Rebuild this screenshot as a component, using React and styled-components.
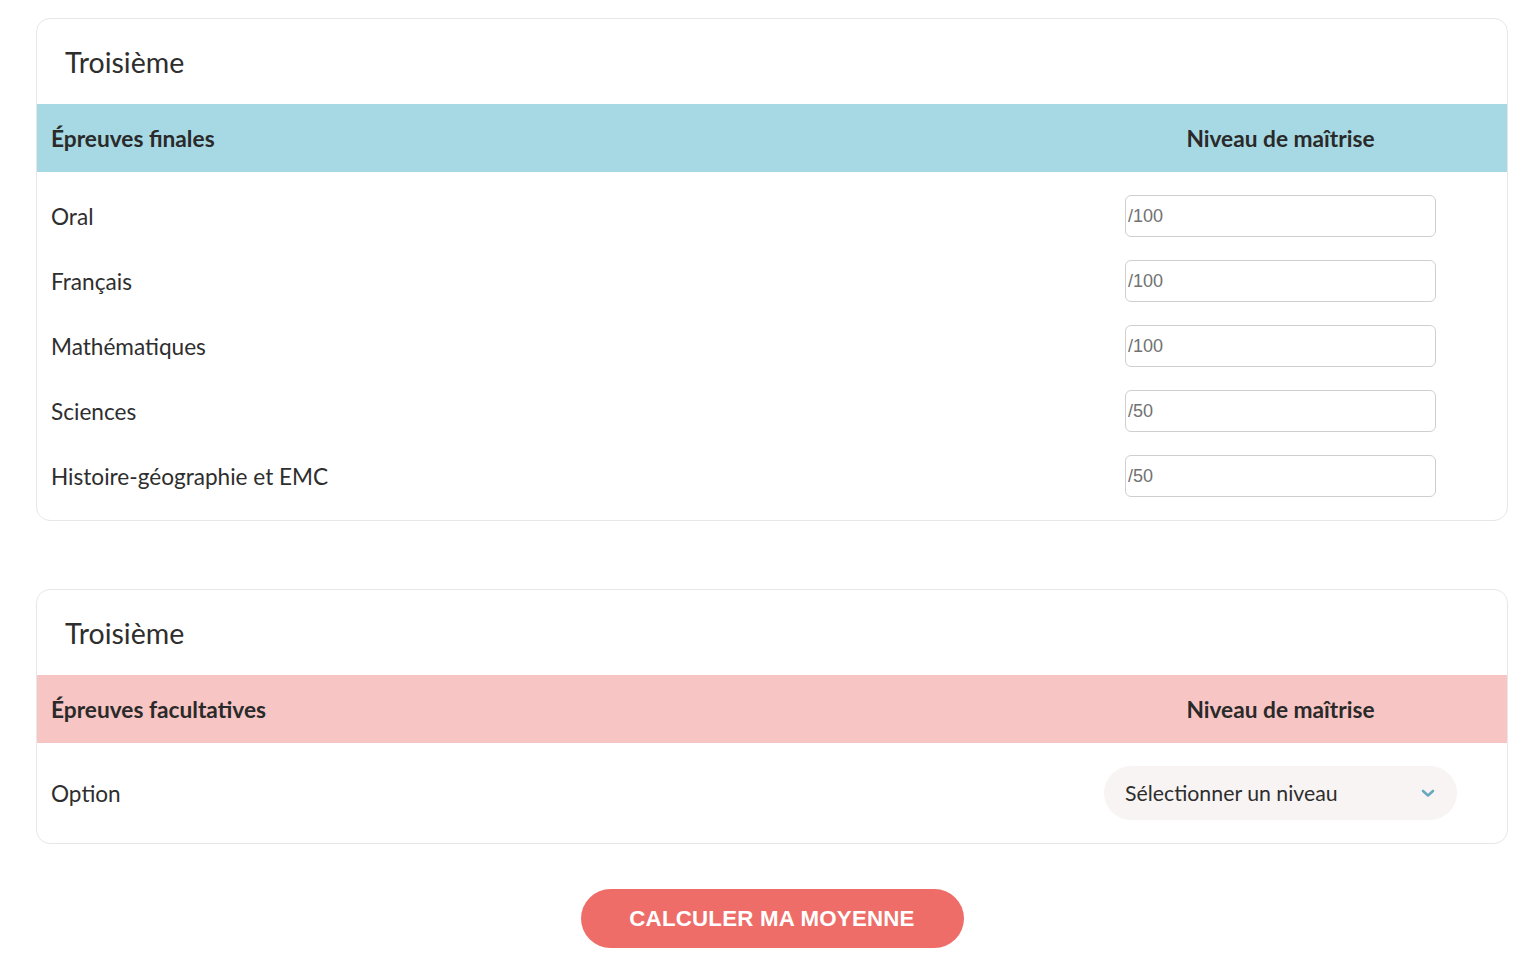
import React from "react";
import styled, { createGlobalStyle } from "styled-components";

const Global = createGlobalStyle`
  html, body { margin: 0; padding: 0; background: #fff; }
  body { font-family: Lato, "Noto Sans", sans-serif; color: #333; }
  * { box-sizing: border-box; }
`;

const Page = styled.div`
  padding: 18px 28px 40px 36px;
  display: flex;
  flex-direction: column;
  align-items: stretch;
`;

const Card = styled.section`
  border: 1px solid #e7e7e7;
  border-radius: 14px;
  overflow: hidden;
  background: #fff;
  margin-bottom: ${(p) => p.$mb || 0}px;
`;

const Title = styled.h2`
  margin: 0;
  height: 85px;
  display: flex;
  align-items: center;
  padding-left: 28px;
  font-family: Lato, sans-serif;
  font-weight: 400;
  font-size: 28.5px;
  color: #2e2e2e;
`;

const Grid = styled.div`
  display: grid;
  grid-template-columns: 1fr 453px;
  align-items: center;
`;

const Head = styled(Grid)`
  height: 68px;
  background: ${(p) => p.$bg};
  font-weight: 700;
  font-size: 22.7px;
  color: #2a2a2a;
`;

const HeadLeft = styled.div`
  padding-left: 14px;
`;

const HeadRight = styled.div`
  text-align: center;
`;

const Body = styled.div`
  padding: 23px 0;
  display: flex;
  flex-direction: column;
  gap: 23px;
`;

const Row = styled(Grid)``;

const Label = styled.div`
  padding-left: 14px;
  font-size: 22.6px;
  color: #2e2e2e;
`;

const Cell = styled.div`
  display: flex;
  justify-content: center;
`;

const Input = styled.input`
  width: 311px;
  height: 42px;
  border: 1px solid #cfcfcf;
  border-radius: 6px;
  padding: 0 2px;
  font-family: "Liberation Sans", Arial, sans-serif;
  font-size: 18px;
  color: #333;
  background: #fff;
  outline: none;
  &::placeholder { color: #727272; }
`;

const Select = styled.div`
  width: 353px;
  height: 54px;
  border-radius: 27px;
  background: #f8f4f3;
  display: flex;
  align-items: center;
  justify-content: space-between;
  padding: 0 22px 0 21px;
  font-size: 21.3px;
  color: #2e2e2e;
`;

const Button = styled.button`
  align-self: center;
  width: 383px;
  height: 59px;
  border: none;
  border-radius: 30px;
  background: #ee6d69;
  color: #fff;
  font-family: "Liberation Sans", Arial, sans-serif;
  font-weight: 700;
  font-size: 22.3px;
  letter-spacing: 0.2px;
  cursor: pointer;
`;

const finals = [
  ["Oral", "/100"],
  ["Français", "/100"],
  ["Mathématiques", "/100"],
  ["Sciences", "/50"],
  ["Histoire-géographie et EMC", "/50"],
];

const Chevron = () => (
  <svg width="14" height="9" viewBox="0 0 14 9">
    <path d="M2 2 L7 6.5 L12 2" fill="none" stroke="#6aa9bf" strokeWidth="2.6" strokeLinecap="round" strokeLinejoin="round" />
  </svg>
);

export default function App() {
  return (
    <>
      <Global />
      <Page>
        <Card $mb={68}>
          <Title>Troisième</Title>
          <Head $bg="#a6d9e4">
            <HeadLeft>Épreuves finales</HeadLeft>
            <HeadRight>Niveau de maîtrise</HeadRight>
          </Head>
          <Body>
            {finals.map(([l, p]) => (
              <Row key={l}>
                <Label>{l}</Label>
                <Cell>
                  <Input placeholder={p} />
                </Cell>
              </Row>
            ))}
          </Body>
        </Card>
        <Card $mb={45}>
          <Title>Troisième</Title>
          <Head $bg="#f7c5c4">
            <HeadLeft>Épreuves facultatives</HeadLeft>
            <HeadRight>Niveau de maîtrise</HeadRight>
          </Head>
          <Body>
            <Row>
              <Label>Option</Label>
              <Cell>
                <Select>
                  <span>Sélectionner un niveau</span>
                  <Chevron />
                </Select>
              </Cell>
            </Row>
          </Body>
        </Card>
        <Button>CALCULER MA MOYENNE</Button>
      </Page>
    </>
  );
}
